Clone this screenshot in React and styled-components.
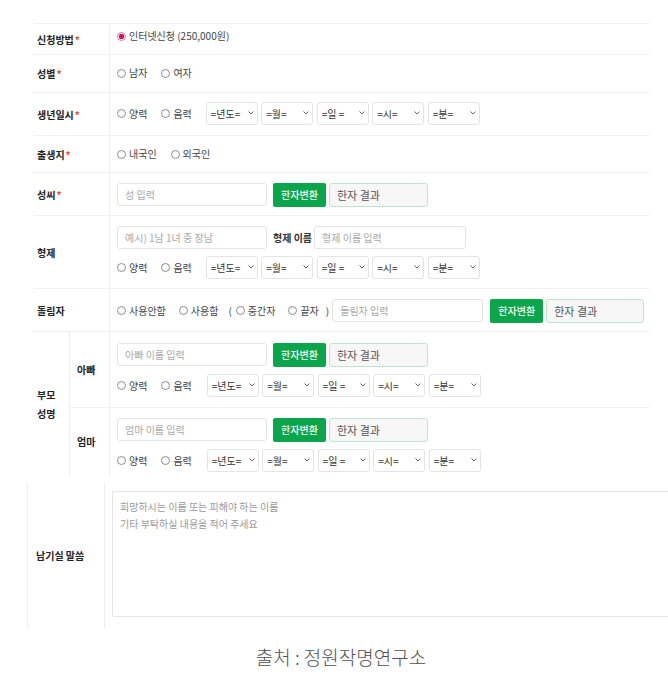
import React from 'react'
import styled, { createGlobalStyle } from 'styled-components'

const GlobalStyle = createGlobalStyle`
  html, body {
    margin: 0;
    padding: 0;
    background: #fff;
    overflow: hidden;
  }
  body {
    font-family: "Noto Sans CJK KR", "Noto Sans", sans-serif;
    color: #333;
  }
  * {
    box-sizing: border-box;
  }
`

const Page = styled.div`
  padding-top: 23px;
  width: 668px;
`

const FormTable = styled.div`
  margin-left: 33px;
  width: 617px;
`

const Row = styled.div`
  display: grid;
  grid-template-columns: ${({ $label }) => $label || '77px'} 1fr;
  border-top: 1px solid #f1f1f1;
`

const LabelCell = styled.div`
  display: flex;
  align-items: center;
  padding-left: ${({ $indent }) => $indent || '4px'};
  border-right: 1px solid #ededed;
  font-size: 10px;
  font-weight: 700;
  line-height: 19px;
  color: #222;
`

const Required = styled.span`
  color: #f04b23;
  margin-left: 1px;
`

const ContentCell = styled.div`
  display: flex;
  flex-direction: column;
  justify-content: center;
  gap: ${({ $gap }) => $gap || '0px'};
  padding: ${({ $pad }) => $pad || '10px 0 9px'};
  padding-left: 7px;
`

const Line = styled.div`
  display: flex;
  align-items: center;
  height: ${({ $h }) => $h || '23px'};
  font-size: 10px;
  line-height: 14px;
  color: #444;
`

const SubGrid = styled.div`
  display: flex;
  flex-direction: column;
`

const SubRow = styled.div`
  display: grid;
  grid-template-columns: 40px 1fr;
  border-top: ${({ $first }) => ($first ? 'none' : '1px solid #f1f1f1')};
`

const RadioOption = styled.label`
  display: inline-flex;
  align-items: center;
  gap: 3px;
  margin-right: ${({ $mr }) => $mr || '14px'};
  white-space: nowrap;
`

const Radio = styled.input.attrs({ type: 'radio' })`
  appearance: none;
  margin: 0;
  width: 9px;
  height: 9px;
  border: 1px solid #8c8c8c;
  border-radius: 50%;
  background: #fff;

  &:checked {
    border-color: #e07aa3;
    background: radial-gradient(circle, #c81a60 0 2.4px, #fdeef4 2.9px);
  }
`

const Paren = styled.span`
  margin: ${({ $m }) => $m};
`

const TextInput = styled.input`
  width: ${({ $w }) => $w || '150px'};
  height: 23px;
  margin: 0;
  padding: 0 7px;
  border: 1px solid #e4e4e4;
  border-radius: 3px;
  background: #fff;
  font-family: inherit;
  font-size: 10px;
  color: #333;
  outline: none;

  &::placeholder {
    color: #a9a9a9;
  }
`

const InlineLabel = styled.span`
  margin: 0 2px 0 6px;
  font-weight: 700;
  color: #333;
`

const HanjaButton = styled.button`
  height: 24px;
  width: 53px;
  margin: 0 3px 0 ${({ $ml }) => $ml || '6px'};
  padding: 0;
  border: none;
  border-radius: 2px;
  background: #0ba64c;
  color: #fff;
  font-family: inherit;
  font-size: 10px;
  font-weight: 500;
`

const ResultBox = styled.div`
  display: flex;
  align-items: center;
  width: ${({ $w }) => $w || '99px'};
  height: 24px;
  padding-left: 7px;
  border: 1.5px solid #bfe6cb;
  border-radius: 3px;
  background: #f7f7f7;
  font-size: 11px;
  color: #555;
`

const Selects = styled.div`
  display: flex;
  gap: 3.5px;
  margin-left: ${({ $ml }) => $ml || '0px'};
`

const SelectWrap = styled.div`
  position: relative;
  width: 52px;
  height: 23px;

  svg {
    position: absolute;
    right: 4px;
    top: 9px;
    pointer-events: none;
  }
`

const Select = styled.select`
  appearance: none;
  width: 100%;
  height: 100%;
  margin: 0;
  padding: 0 0 0 4px;
  border: 1px solid #e3e3e3;
  border-radius: 3px;
  background: #fff;
  font-family: inherit;
  font-size: 10px;
  color: #333;
  outline: none;
`

const MessageTable = styled.div`
  display: grid;
  grid-template-columns: 77px 1fr;
  width: 660px;
  margin: 8px 0 0 27px;
  border-left: 1px solid #eeeeee;
`

const MessageLabel = styled.div`
  display: flex;
  align-items: center;
  padding-left: 8px;
  border-right: 1px solid #eeeeee;
  font-size: 10px;
  font-weight: 700;
  color: #222;
`

const MessageCell = styled.div`
  padding: 8px 0 11px 7px;
`

const Message = styled.textarea`
  display: block;
  width: 100%;
  height: 126px;
  margin: 0;
  padding: 6px 7px;
  border: 1px solid #e6e6e6;
  border-radius: 2px;
  resize: none;
  font-family: inherit;
  font-size: 10px;
  line-height: 17px;
  outline: none;

  &::placeholder {
    color: #9a9a9a;
  }
`

const Source = styled.div`
  margin-top: 17px;
  padding-left: 14px;
  text-align: center;
  font-size: 19px;
  font-weight: 300;
  line-height: 24px;
  color: #505050;
`

const Chevron = () => (
  <svg width="6" height="4" viewBox="0 0 6 4">
    <path d="M0.5 0.5 L3 3 L5.5 0.5" fill="none" stroke="#555" strokeWidth="0.9" />
  </svg>
)

const DATE_PARTS = ['=년도=', '=월=', '=일 =', '=시=', '=분=']

const DateSelects = ({ ml }) => (
  <Selects $ml={ml}>
    {DATE_PARTS.map((part) => (
      <SelectWrap key={part}>
        <Select defaultValue={part}>
          <option>{part}</option>
        </Select>
        <Chevron />
      </SelectWrap>
    ))}
  </Selects>
)

const CalendarLine = ({ name, ml }) => (
  <Line>
    <RadioOption>
      <Radio name={name} />
      양력
    </RadioOption>
    <RadioOption $mr="0px">
      <Radio name={name} />
      음력
    </RadioOption>
    <DateSelects ml={ml} />
  </Line>
)

const NameLine = ({ placeholder }) => (
  <Line>
    <TextInput placeholder={placeholder} />
    <HanjaButton>한자변환</HanjaButton>
    <ResultBox>한자 결과</ResultBox>
  </Line>
)

const App = () => (
  <>
    <GlobalStyle />
    <Page>
      <FormTable>
        <Row>
          <LabelCell>
            신청방법<Required>*</Required>
          </LabelCell>
          <ContentCell $pad="5px 0 11px">
            <Line $h="14px">
              <RadioOption>
                <Radio name="apply" defaultChecked />
                인터넷신청 (250,000원)
              </RadioOption>
            </Line>
          </ContentCell>
        </Row>

        <Row>
          <LabelCell>
            성별<Required>*</Required>
          </LabelCell>
          <ContentCell $pad="11px 0 12px">
            <Line $h="14px">
              <RadioOption>
                <Radio name="gender" />
                남자
              </RadioOption>
              <RadioOption>
                <Radio name="gender" />
                여자
              </RadioOption>
            </Line>
          </ContentCell>
        </Row>

        <Row>
          <LabelCell>
            생년일시<Required>*</Required>
          </LabelCell>
          <ContentCell $pad="9px 0 10px">
            <CalendarLine name="birth" ml="14px" />
          </ContentCell>
        </Row>

        <Row>
          <LabelCell>
            출생지<Required>*</Required>
          </LabelCell>
          <ContentCell $pad="11px 0 11px">
            <Line $h="14px">
              <RadioOption>
                <Radio name="place" />
                내국인
              </RadioOption>
              <RadioOption>
                <Radio name="place" />
                외국인
              </RadioOption>
            </Line>
          </ContentCell>
        </Row>

        <Row>
          <LabelCell>
            성씨<Required>*</Required>
          </LabelCell>
          <ContentCell $pad="10px 0 9px">
            <NameLine placeholder="성 입력" />
          </ContentCell>
        </Row>

        <Row>
          <LabelCell>형제</LabelCell>
          <ContentCell $pad="10px 0 9px" $gap="7px">
            <Line>
              <TextInput placeholder="예시) 1남 1녀 중 장남" />
              <InlineLabel>형제 이름</InlineLabel>
              <TextInput $w="152px" placeholder="형제 이름 입력" />
            </Line>
            <CalendarLine name="sibling" ml="14px" />
          </ContentCell>
        </Row>

        <Row>
          <LabelCell>돌림자</LabelCell>
          <ContentCell $pad="10px 0 9px">
            <Line>
              <RadioOption $mr="13px">
                <Radio name="dollim" />
                사용안함
              </RadioOption>
              <RadioOption $mr="10px">
                <Radio name="dollim" />
                사용함
              </RadioOption>
              <Paren $m="0 4px 0 0">(</Paren>
              <RadioOption $mr="13px">
                <Radio name="dollimPos" />
                중간자
              </RadioOption>
              <RadioOption $mr="7px">
                <Radio name="dollimPos" />
                끝자
              </RadioOption>
              <Paren $m="0 3px 0 0">)</Paren>
              <TextInput $w="151px" placeholder="돌림자 입력" />
              <HanjaButton $ml="7px">한자변환</HanjaButton>
              <ResultBox $w="98px">한자 결과</ResultBox>
            </Line>
          </ContentCell>
        </Row>

        <Row $label="37px">
          <LabelCell>
            부모
            <br />
            성명
          </LabelCell>
          <SubGrid>
            <SubRow $first>
              <LabelCell $indent="7px">아빠</LabelCell>
              <ContentCell $pad="11px 0 10px" $gap="8px">
                <NameLine placeholder="아빠 이름 입력" />
                <CalendarLine name="father" ml="15px" />
              </ContentCell>
            </SubRow>
            <SubRow>
              <LabelCell $indent="7px">엄마</LabelCell>
              <ContentCell $pad="10px 0 3px" $gap="8px">
                <NameLine placeholder="엄마 이름 입력" />
                <CalendarLine name="mother" ml="15px" />
              </ContentCell>
            </SubRow>
          </SubGrid>
        </Row>
      </FormTable>

      <MessageTable>
        <MessageLabel>남기실 말씀</MessageLabel>
        <MessageCell>
          <Message
            placeholder={'희망하시는 이름 또는 피해야 하는 이름\n기타 부탁하실 내용을 적어 주세요'}
          />
        </MessageCell>
      </MessageTable>

      <Source>출처 : 정원작명연구소</Source>
    </Page>
  </>
)

export default App
